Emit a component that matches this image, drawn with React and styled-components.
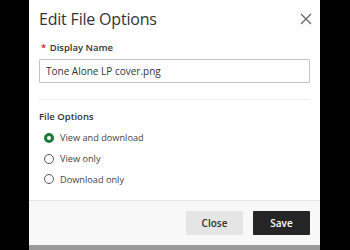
import React, { useState } from "react";
import styled, { createGlobalStyle } from "styled-components";

const GlobalStyle = createGlobalStyle`
  html, body {
    margin: 0;
    padding: 0;
    background: #000;
    font-family: "Open Sans", "Liberation Sans", sans-serif;
  }
`;

const options = [
  { id: "both", label: "View and download" },
  { id: "view", label: "View only" },
  { id: "download", label: "Download only" },
];

const App = () => {
  const [choice, setChoice] = useState("both");
  const [name, setName] = useState("Tone Alone LP cover.png");

  return (
    <>
      <GlobalStyle />
      <Page>
        <Dialog>
          <Body>
            <Header>
              <Title>Edit File Options</Title>
              <CloseIcon aria-label="Close">
                <svg width="12" height="12" viewBox="0 0 12 12">
                  <path d="M1 1 L11 11 M11 1 L1 11" stroke="#666" strokeWidth="1.3" fill="none" />
                </svg>
              </CloseIcon>
            </Header>

            <Label>
              <Required>*</Required> Display Name
            </Label>
            <TextInput value={name} onChange={(e) => setName(e.target.value)} />

            <Divider />

            <SectionTitle>File Options</SectionTitle>
            <RadioList>
              {options.map((opt) => (
                <RadioRow key={opt.id} onClick={() => setChoice(opt.id)}>
                  <RadioDot checked={choice === opt.id} />
                  <RadioText>{opt.label}</RadioText>
                </RadioRow>
              ))}
            </RadioList>
          </Body>

          <Footer>
            <Button>Close</Button>
            <Button primary>Save</Button>
          </Footer>
        </Dialog>
        <BottomBar />
      </Page>
    </>
  );
};

const Page = styled.div`
  width: 350px;
  height: 250px;
  padding-left: 29px;
  box-sizing: border-box;
  overflow: hidden;
`;

const Dialog = styled.div`
  width: 291px;
  height: 245px;
  background: #fff;
  display: flex;
  flex-direction: column;
`;

const Body = styled.div`
  flex: 1;
  padding: 0 10px;
`;

const Header = styled.div`
  display: flex;
  justify-content: space-between;
  align-items: flex-start;
  height: 38px;
  padding-top: 7px;
  box-sizing: border-box;
`;

const Title = styled.h2`
  margin: 0;
  font-size: 16px;
  line-height: 24px;
  font-weight: 400;
  letter-spacing: -0.2px;
  color: #333;
`;

const CloseIcon = styled.button`
  border: none;
  background: none;
  padding: 0;
  margin: 6px -2px 0 0;
  width: 12px;
  height: 12px;
  display: flex;
  cursor: pointer;
`;

const Label = styled.div`
  height: 20px;
  font-size: 9.5px;
  line-height: 20px;
  font-weight: 600;
  color: #333;
  padding-left: 2px;
`;

const Required = styled.span`
  color: #c2161b;
  margin-right: 1px;
`;

const TextInput = styled.input`
  display: block;
  width: 100%;
  height: 24px;
  margin-top: 1px;
  box-sizing: border-box;
  border: 1px solid #c4c4c4;
  border-radius: 1px;
  padding: 0 6px;
  font-family: inherit;
  font-size: 10px;
  color: #333;
  outline: none;
`;

const Divider = styled.hr`
  margin: 16px 0 0;
  border: none;
  border-top: 1px solid #ececec;
`;

const SectionTitle = styled.div`
  margin-top: 8px;
  height: 18px;
  font-size: 9.5px;
  line-height: 18px;
  font-weight: 600;
  color: #333;
`;

const RadioList = styled.div`
  display: flex;
  flex-direction: column;
  padding: 1.5px 0 0 5px;
`;

const RadioRow = styled.label`
  display: flex;
  align-items: center;
  height: 20.7px;
  gap: 6px;
  cursor: pointer;
`;

const RadioDot = styled.span`
  width: 10px;
  height: 10px;
  box-sizing: border-box;
  border-radius: 50%;
  border: ${(p) => (p.checked ? "3px solid #1f7a3a" : "1px solid #555")};
  background: #fff;
`;

const RadioText = styled.span`
  font-size: 9.2px;
  color: #444;
`;

const Footer = styled.div`
  height: 45px;
  box-sizing: border-box;
  border-top: 1px solid #e6e6e6;
  background: #f8f8f8;
  display: flex;
  justify-content: flex-end;
  align-items: center;
  gap: 10px;
  padding: 0 10px 0 0;
`;

const Button = styled.button`
  width: 57px;
  height: 24px;
  border: none;
  border-radius: 1px;
  font-family: inherit;
  font-size: 10px;
  font-weight: 600;
  background: ${(p) => (p.primary ? "#262626" : "#e5e5e5")};
  color: ${(p) => (p.primary ? "#fff" : "#333")};
  cursor: pointer;
`;

const BottomBar = styled.div`
  width: 291px;
  height: 5px;
  background: #9a9a9a;
`;

export default App;
